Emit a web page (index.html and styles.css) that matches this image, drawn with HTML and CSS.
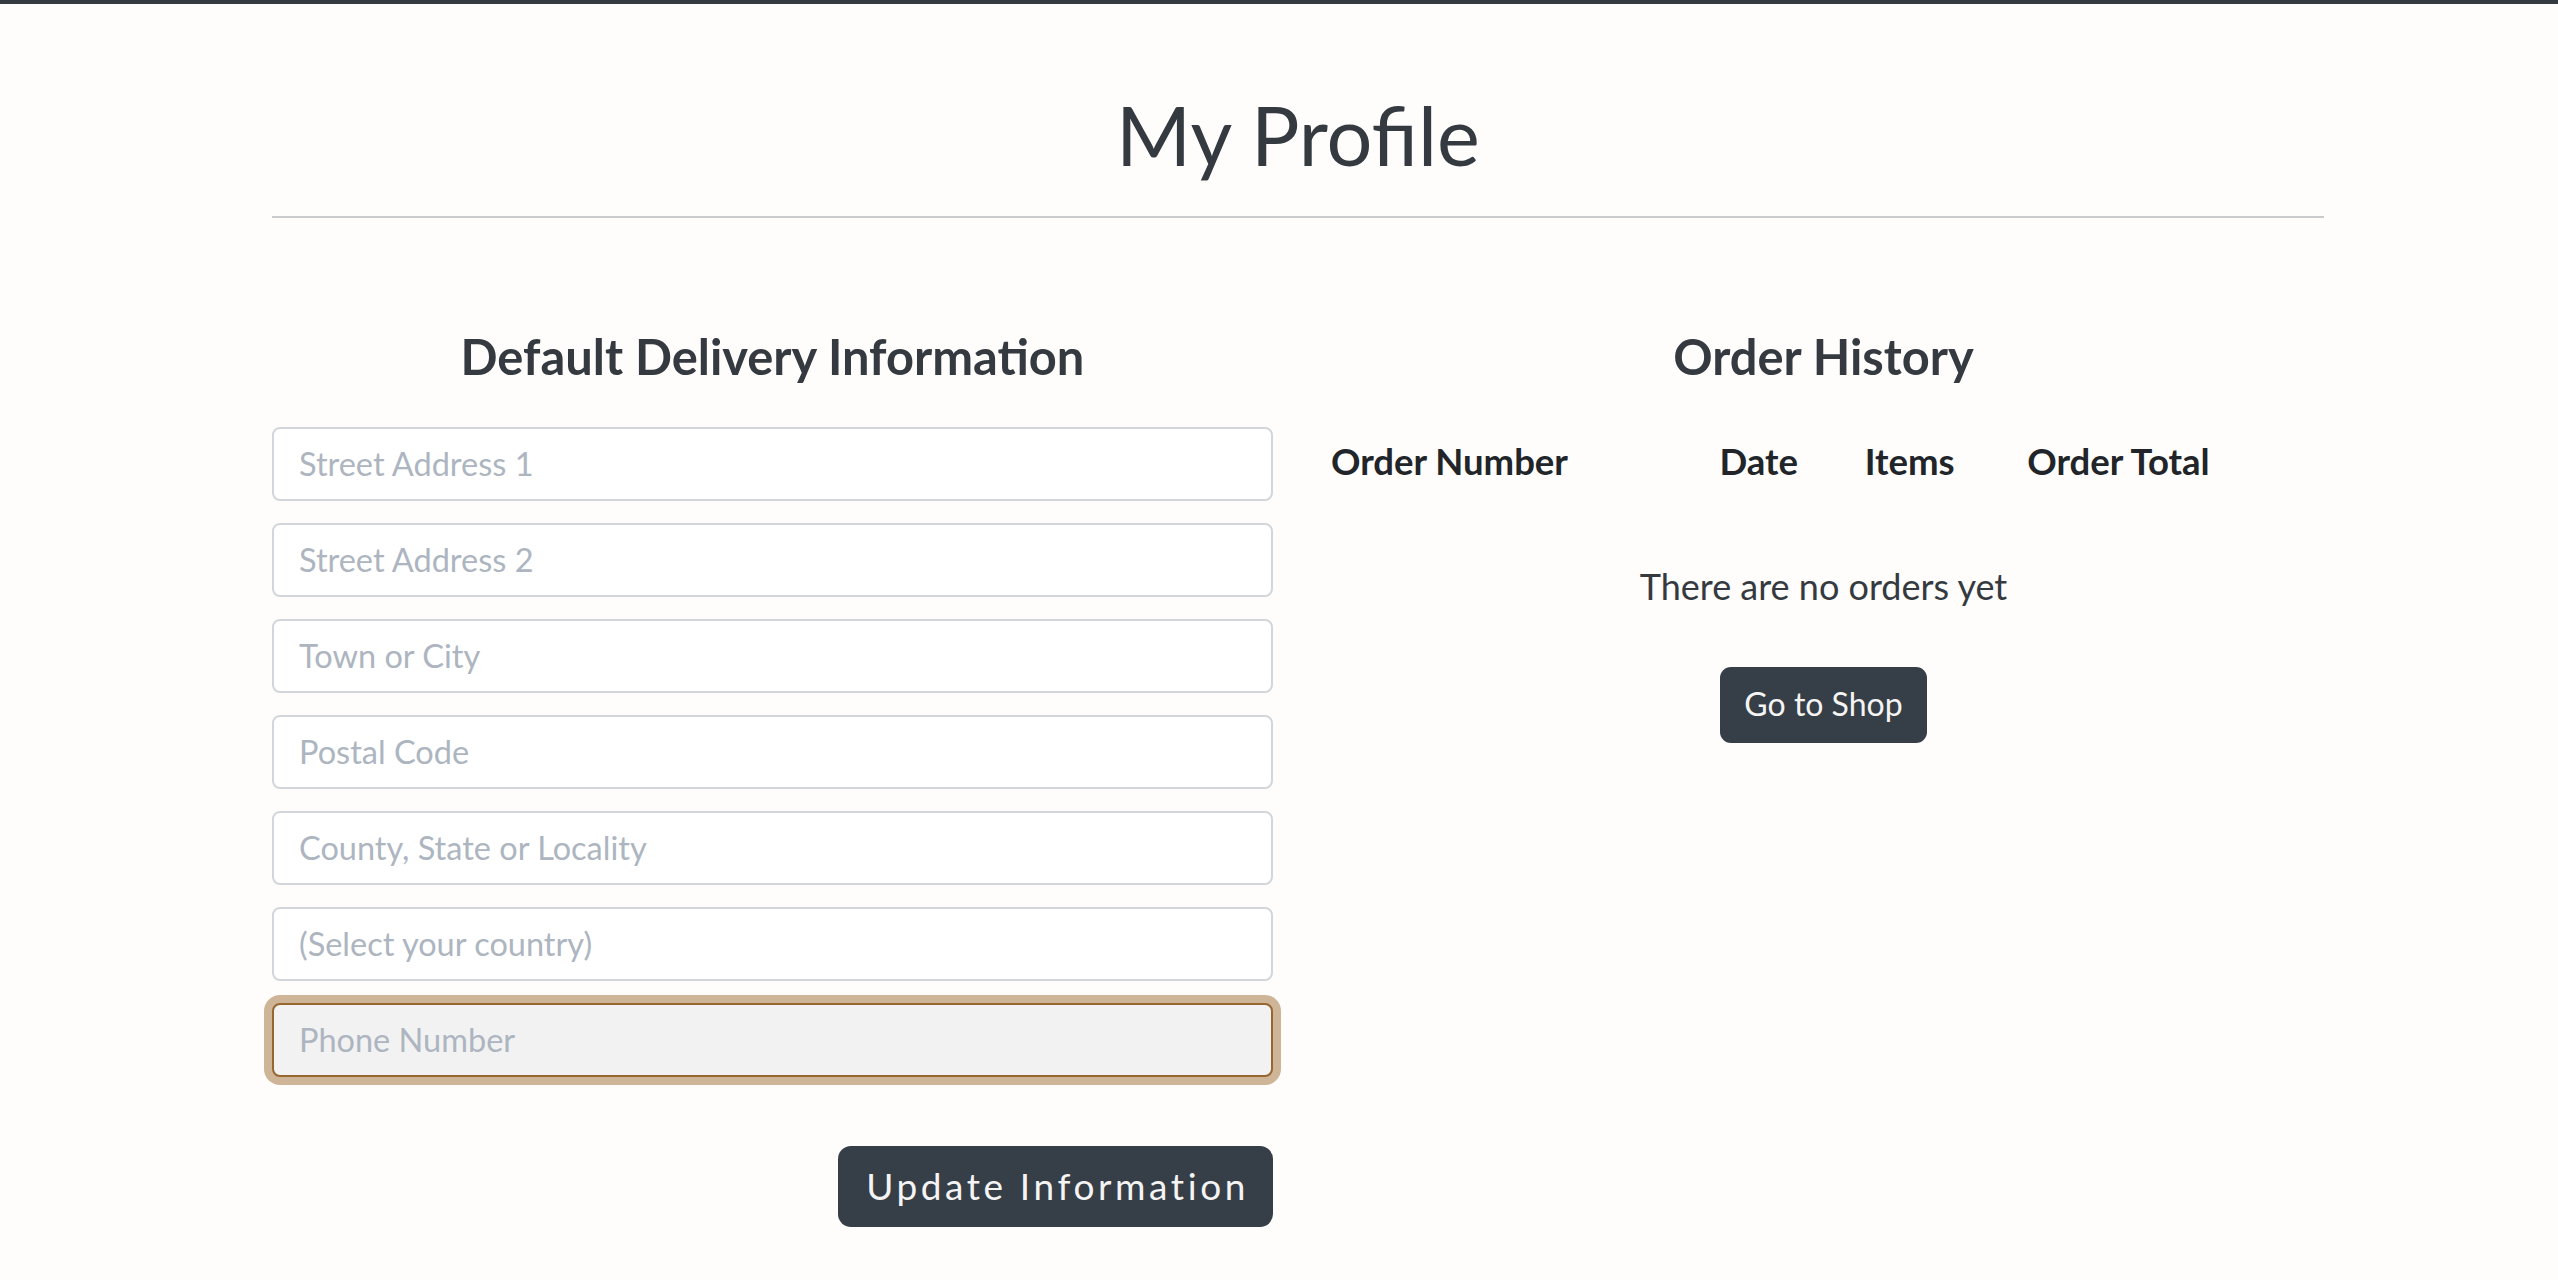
FILE: index.html
```html
<!DOCTYPE html>
<html lang="en">
<head>
<meta charset="utf-8">
<title>My Profile</title>
<link rel="stylesheet" href="styles.css">
</head>
<body>
<div class="topbar"></div>
<main class="container">
  <h1 class="page-title">My Profile</h1>
  <hr class="divider">
  <div class="row">
    <section class="col">
      <h2 class="section-title">Default Delivery Information</h2>
      <form class="delivery-form">
        <input class="field" type="text" placeholder="Street Address 1">
        <input class="field" type="text" placeholder="Street Address 2">
        <input class="field" type="text" placeholder="Town or City">
        <input class="field" type="text" placeholder="Postal Code">
        <input class="field" type="text" placeholder="County, State or Locality">
        <div class="field field-select">(Select your country)</div>
        <input class="field field-focus" type="text" placeholder="Phone Number">
        <div class="form-actions">
          <button type="button" class="btn btn-update">Update Information</button>
        </div>
      </form>
    </section>
    <section class="col">
      <h2 class="section-title">Order History</h2>
      <table class="orders">
        <thead>
          <tr>
            <th>Order Number</th>
            <th>Date</th>
            <th>Items</th>
            <th>Order Total</th>
          </tr>
        </thead>
      </table>
      <p class="empty">There are no orders yet</p>
      <div class="shop-wrap">
        <button type="button" class="btn btn-shop">Go to Shop</button>
      </div>
    </section>
  </div>
</main>
</body>
</html>
```

FILE: styles.css
```css
* { box-sizing: border-box; }

html, body {
  margin: 0;
  padding: 0;
}

body {
  background: #fefdfb;
  font-family: Lato, "Noto Sans", sans-serif;
  color: #343a40;
}

.topbar {
  height: 4px;
  background: #343a40;
}

.container {
  width: 2052px;
  margin-left: 272px;
}

.page-title {
  margin: 83px 0 33px;
  font-size: 81px;
  font-weight: 400;
  line-height: 96px;
  text-align: center;
  color: #343a40;
}

.divider {
  margin: 0;
  border: 0;
  height: 2px;
  background: #cacbcd;
}

.row {
  display: grid;
  grid-template-columns: 1fr 1fr;
  column-gap: 50px;
  margin-top: 109px;
}

.col {
  display: flex;
  flex-direction: column;
}

.section-title {
  margin: 0 0 41px;
  font-size: 48.8px;
  font-weight: 700;
  line-height: 1.2;
  text-align: center;
  color: #343a40;
}

.delivery-form {
  display: flex;
  flex-direction: column;
  gap: 22px;
}

.field {
  display: flex;
  align-items: center;
  width: 100%;
  height: 74px;
  padding: 0 25px;
  border: 2px solid #d2d6db;
  border-radius: 8px;
  background: #ffffff;
  font-family: Lato, "Noto Sans", sans-serif;
  font-size: 32.5px;
  line-height: 1.2;
  color: #343a40;
  outline: none;
}

.field::placeholder {
  color: #adb5c0;
  opacity: 1;
}

.field-select {
  color: #adb5c0;
}

.field-focus {
  background: #f2f2f2;
  border-color: #986630;
  box-shadow: 0 0 0 8px #cfb597;
}

.form-actions {
  display: flex;
  justify-content: flex-end;
  margin-top: 47px;
}

.btn {
  border: 0;
  background: #363e47;
  color: #f4f4f4;
  font-family: Lato, "Noto Sans", sans-serif;
  cursor: pointer;
}

.btn-update {
  height: 81px;
  padding: 0 24px 0 28px;
  border-radius: 13px;
  font-size: 37px;
  letter-spacing: 3.6px;
  line-height: 1.2;
}

.orders {
  width: 100%;
  border-collapse: collapse;
  margin-top: 5px;
}

.orders th {
  padding: 8px;
  font-size: 36.5px;
  font-weight: 700;
  line-height: 1.2;
  text-align: left;
  color: #212529;
}

.empty {
  margin: 74px 0 0;
  font-size: 36px;
  line-height: 1.2;
  text-align: center;
  color: #343a40;
}

.shop-wrap {
  display: flex;
  justify-content: center;
  margin-top: 58px;
}

.btn-shop {
  height: 76px;
  padding: 0 24px;
  border-radius: 11px;
  font-size: 32px;
  line-height: 1.2;
}
```
